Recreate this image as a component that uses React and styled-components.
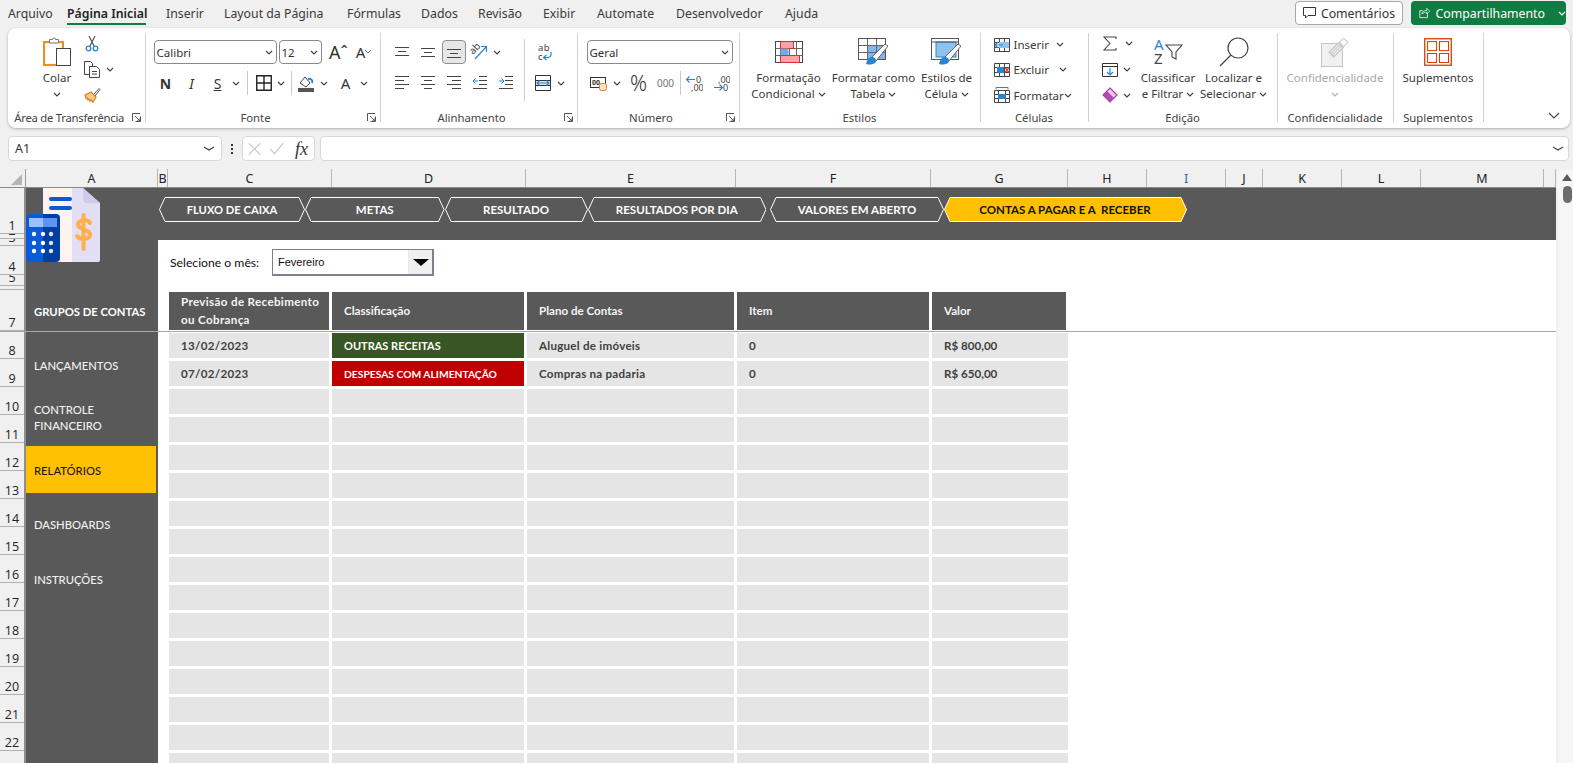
import React from 'react';
import styled, { createGlobalStyle } from 'styled-components';

const Global = createGlobalStyle`
  html, body { margin: 0; padding: 0; background: #f0f0f0; overflow: hidden; }
  * { box-sizing: border-box; }
`;
const UI = `"Noto Sans", "Open Sans", sans-serif`;
const CELL = `Lato, "Liberation Sans", sans-serif`;

const App_ = styled.div`
  width: 1573px; height: 763px; overflow: hidden; display: flex; flex-direction: column;
  background: #f0f0f0; font-family: ${UI}; color: #333; position: relative;
`;
/* menu */
const MenuBar = styled.div`height: 28px; display: flex; align-items: flex-start; padding-left: 8px; flex: none;`;
const MenuTab = styled.div`
  width: ${p => p.$w}px; margin-right: ${p => p.$mr}px; height: 25px; line-height: 27px; font-size: 12.3px; white-space: nowrap;
  color: ${p => (p.$on ? '#222' : '#3a3a3a')}; font-weight: ${p => (p.$on ? 600 : 400)};
  border-bottom: ${p => (p.$on ? '2px solid #107c41' : '0')};
`;
const MenuRight = styled.div`margin-left: auto; display: flex; gap: 8px; padding: 1px 7px 0 0;`;
const Comments = styled.div`
  width: 108px; height: 24px; background: #fff; border: 1px solid #a8a8a8; border-radius: 4px; font-size: 12.3px;
  display: flex; align-items: center; justify-content: center; gap: 5px; color: #333;
`;
const Share = styled.div`
  width: 155px; height: 24px; background: #107c41; border-radius: 4px; font-size: 12.3px; color: #fff;
  display: flex; align-items: center; padding-left: 8px; gap: 5px;
`;
const ShareChev = styled.span`margin-left: 8px; display: inline-flex;`;
/* ribbon */
const Ribbon = styled.div`
  margin-left: 8px; width: 1562px; height: 100px; flex: none; background: #fff; border-radius: 8px;
  box-shadow: 0 1px 3px rgba(0,0,0,.28); display: flex; position: relative;
`;
const Group = styled.div`
  width: ${p => p.$w}px; height: 89px; margin-top: 5px; position: relative; display: flex; flex-direction: column;
  border-right: 1px solid #d2d2d2; flex: none;
`;
const Body = styled.div`
  height: 75px; flex: none; display: flex; padding: ${p => p.$p || '0'};
  justify-content: ${p => p.$center ? 'center' : 'flex-start'};
`;
const GroupLabel = styled.div`
  height: 20px; line-height: 20px; font-size: 11.3px; text-align: center; color: #444; white-space: nowrap;
  padding-right: ${p => (p.$launcher ? 14 : 0)}px; letter-spacing: ${p => p.$ls || 0}px;
`;
const Launcher = styled.span`position: absolute; right: 4px; bottom: 0; display: flex;`;
const Collapse = styled.span`position: absolute; right: 10px; bottom: 9px; display: flex;`;
const Big = styled.div`
  width: ${p => p.$w}px; flex: none; display: flex; flex-direction: column; align-items: center;
  font-size: 11.5px; line-height: 16px; color: ${p => (p.$off ? '#a9a9a9' : '#3a3a3a')}; white-space: nowrap;
`;
const BigIcon = styled.div`height: 37px; display: flex; align-items: center; justify-content: center;`;
const BigLine = styled.div`height: 16px; display: flex; align-items: center; gap: 3px;`;
const SmallCol = styled.div`
  display: flex; flex-direction: column; margin: ${p => p.$mt ?? -2}px 0 0 ${p => p.$ml || 0}px; width: ${p => p.$w}px; flex: none;
`;
const SmallRow = styled.div`height: 26px; display: flex; align-items: center; font-size: 11.5px; color: #3a3a3a;`;
const SmallText = styled.span`width: ${p => p.$w}px; flex: none; padding-left: 4px; white-space: nowrap;`;
const Stack = styled.div`
  display: flex; flex-direction: column; gap: 7px; padding-top: 7px; width: ${p => p.$w ? p.$w + 'px' : 'auto'}; flex: none;
  padding-left: ${p => p.$pl || 0}px;
`;
const Row = styled.div`height: 24px; display: flex; align-items: center; padding-left: ${p => p.$pl || 0}px;`;
const Tool = styled.div`
  width: ${p => p.$w}px; height: 24px; flex: none; display: flex; align-items: center; justify-content: center;
  margin-left: ${p => p.$ml || 0}px; color: ${p => p.$c || '#333'}; font-size: ${p => p.$fs || 13}px; font-weight: ${p => p.$fw || 400}; font-style: ${p => p.$it ? 'italic' : 'normal'};
  text-decoration: ${p => p.$un ? 'underline' : 'none'}; font-family: ${UI};
`;
const Pressed = styled(Tool)`background: #e6e6e6; border: 1px solid #8e8e8e; border-radius: 4px; margin-left: 1px;`;
const ToolSep = styled.div`width: 1px; height: 24px; background: #c8c8c8; flex: none; margin: 0 ${p => p.$m}px;`;
const VSep = styled.div`width: 1px; height: 62px; margin-top: 6px; background: #cfcfcf; flex: none;`;
const Select = styled.div`
  width: ${p => p.$w}px; height: 24px; flex: none; margin-right: ${p => p.$mr || 0}px; border: 1px solid #8a8a8a; border-radius: 4px; background: #fff;
  display: flex; align-items: center; justify-content: space-between; padding: 0 3px 0 2px; font-size: 11.5px; color: #333;
`;
/* formula bar */
const FormulaBar = styled.div`margin: 8px 0 8px 8px; height: 25px; flex: none; display: flex; align-items: center;`;
const Box = styled.div`
  height: 25px; width: ${p => p.$w}px; background: #fff; border: 1px solid #d8d8d8; border-radius: 4px; flex: none;
  display: flex; align-items: center; justify-content: ${p => p.$j || 'space-between'}; padding: 0 ${p => p.$pr ?? 6}px 0 ${p => p.$pl ?? 6}px;
  font-size: 12.5px; color: #333; margin-left: ${p => p.$ml || 0}px; gap: ${p => p.$gap || 0}px;
`;
const Dots = styled.span`
  margin-left: 9px; display: flex; flex-direction: column; gap: 2px;
  i { width: 2px; height: 2px; background: #333; display: block; }
`;
const Fx = styled.span`font: italic 400 18px "Liberation Serif", serif; color: #333; margin-left: 3px; line-height: 20px;`;
/* sheet */
const SheetArea = styled.div`flex: 1; min-height: 0; display: flex; position: relative;`;
const SheetCol = styled.div`width: 1556px; flex: none; display: flex; flex-direction: column;`;
const ScrollBar = styled.div`
  flex: 1; margin-left: 2px; background: #f6f6f6; border-radius: 6px 0 0 0; position: relative; display: flex; flex-direction: column; align-items: center;
  padding: 5px 0 0 3px;
`;
const ScrollUp = styled.span`width: 0; height: 0; border-left: 5px solid transparent; border-right: 5px solid transparent; border-bottom: 7px solid #5a5a5a;`;
const Thumb = styled.span`width: 9px; height: 17px; border-radius: 5px; background: #6c6c6c; margin-top: 5px;`;
const ColHeads = styled.div`height: 19px; display: flex; flex: none; background: #f0f0f0; border-bottom: 1px solid #8a8a8a;`;
const Corner = styled.div`width: 26px; flex: none; position: relative; border-right: 1px solid #9a9a9a;`;
const CornerTri = styled.span`
  position: absolute; right: 3px; bottom: 2px; width: 0; height: 0; border-left: 11px solid transparent; border-bottom: 11px solid #b4b4b4;
`;
const ColHead = styled.div`
  width: ${p => p.$w}px; flex: none; text-align: center; line-height: 20px; font-size: 12.5px; color: ${p => p.$c || '#222'}; border-right: 1px solid #b6b6b6; overflow: hidden;
`;
const SheetRows = styled.div`flex: 1; min-height: 0; display: flex; overflow: hidden;`;
const RowHeads = styled.div`width: 26px; flex: none; border-right: 2px solid #8f8f8f; background: #f0f0f0;`;
const RowHead = styled.div`
  height: ${p => p.$h}px; border-bottom: 1px solid #b0b0b0; overflow: hidden; display: flex; align-items: flex-end; justify-content: center;
  padding-bottom: 1px; font-size: 12.5px; line-height: 13px; color: #222; font-family: "Open Sans", sans-serif;
`;
const Sidebar = styled.div`width: 132px; flex: none; background: #595959; font-family: ${CELL}; font-size: 11.25px; color: #f2f2f2;`;
const Logo = styled.div`height: 74px; display: flex;`;
const SideTitle = styled.div`height: 69px; padding: 42px 0 0 8px; line-height: 16px; font-weight: 700; color: #fff;`;
const SideItem = styled.div`
  height: ${p => p.$h}px; padding: ${p => p.$pt}px 0 0 8px; line-height: 16px; font-weight: 500;
  background: ${p => (p.$on ? '#ffc000' : 'transparent')}; color: ${p => (p.$on ? '#1a1a1a' : '#f2f2f2')};
  width: ${p => (p.$on ? '130px' : 'auto')};
`;
const Main = styled.div`flex: 1; min-width: 0; background: #fff; font-family: ${CELL}; font-size: 11.6px;`;
const TopBand = styled.div`height: 52px; background: #595959; padding: 9px 0 0 1px; display: flex; align-items: flex-start;`;
const TabItem = styled.div`
  width: ${p => p.$w}px; height: 25px; flex: none; position: relative; margin-left: ${p => p.$ml || 0}px; display: flex; align-items: center; justify-content: center;
  font-weight: 700; font-size: ${p => p.$fs || 11.5}px; color: ${p => (p.$on ? '#111' : '#fff')};
`;
const TabShape = styled.svg`position: absolute; left: 0; top: 0;`;
const TabText = styled.span`position: relative; white-space: pre;`;
const MonthRow = styled.div`height: 36px; padding: 9px 0 0 12px; display: flex; align-items: center; color: #111; font-size: 12.2px;`;
const MonthLabel = styled.span`width: 102px; flex: none;`;
const Combo = styled.div`
  width: 162px; height: 27px; border: 1px solid #7f7f90; border-right-width: 2px; border-bottom-width: 2px; display: flex; align-items: center; justify-content: space-between;
  font: 11px "Liberation Sans", sans-serif; color: #111; padding-left: 5px; background: #fff;
`;
const ComboBtn = styled.div`
  width: 24px; height: 24px; background: #f0f0f0; display: flex; align-items: center; justify-content: center;
  border-left: 1px solid #e8e8e8;
`;
const ComboArrow = styled.span`width: 0; height: 0; border-left: 8px solid transparent; border-right: 8px solid transparent; border-top: 7px solid #000;`;
const Table = styled.div`
  margin: 16px 0 0 11px; display: grid; grid-template-columns: 160px 192px 207px 192px 136px; column-gap: 3px; row-gap: 3px;
  grid-template-rows: 38px; grid-auto-rows: 25px; width: max-content;
`;
const HeadCell = styled.div`
  height: 38px; background: #595959; color: #f4f4f4; font-weight: 700; padding: 0 0 0 12px; display: flex; align-items: center; line-height: 18px;
  margin-right: ${p => p.$mr || 0}px; white-space: nowrap; letter-spacing: ${p => p.$ls || 0}px;
`;
const Cell = styled.div`
  background: ${p => p.$bg || '#e5e5e5'}; color: ${p => p.$c || '#404040'}; font-weight: 700; padding-left: 12px; display: flex; align-items: center; white-space: nowrap;
  letter-spacing: ${p => p.$ls || 0}px; font-size: ${p => p.$fs || 11.6}px;
`;
const Freeze = styled.div`position: absolute; left: 0; top: 162px; width: 1556px; height: 1px; background: #a8a8a8;`;

/* icons */
const Svg = ({ w, h, children, ...r }) => <svg width={w} height={h} viewBox={`0 0 ${w} ${h}`} fill="none" {...r}>{children}</svg>;
const Chev = ({ c = '#444', w = 8 }) => <Svg w={w} h={5}><polyline points={`1,1 ${w / 2},4 ${w - 1},1`} stroke={c} strokeWidth="1.2" /></Svg>;
const Launch = () => <Svg w={9} h={9}><path d="M.5 8V.5H8M8.5 3.5V8.5H3.5M3 3l5 5M8 5v3H5" stroke="#555" /></Svg>;

const Paste = () => <Svg w={28} h={31}>
  <rect x="1" y="6" width="19" height="23" fill="#fff5dc" stroke="#e8902a" strokeWidth="2" />
  <rect x="3" y="8" width="15" height="19" fill="#fff" />
  <path d="M6.5 7V3.5h3a1.5 1.5 0 0 1 3 0h3V7z" fill="#fff" stroke="#777" />
  <rect x="13.5" y="12.5" width="14" height="17" fill="#fff" stroke="#444" />
</Svg>;
const Scissors = () => <Svg w={16} h={17}>
  <path d="M5 1l5 10M11 1L6 11" stroke="#555" strokeWidth="1.2" />
  <circle cx="4.5" cy="13.5" r="2.3" stroke="#2a85d0" strokeWidth="1.3" /><circle cx="11.5" cy="13.5" r="2.3" stroke="#2a85d0" strokeWidth="1.3" />
</Svg>;
const Copy = () => <Svg w={17} h={17}>
  <path d="M.5 .5h6l2 2v11H.5z" fill="#fff" stroke="#444" />
  <path d="M5.5 5.5h7l3 3v8h-10z" fill="#fff" stroke="#444" /><path d="M8 10.5h5M8 13h5" stroke="#444" />
</Svg>;
const Brush = () => <Svg w={17} h={16}>
  <path d="M1 8l6-3 5 5-3 5-2-2-1 1-1-2-1 1-1-2-1 0z" fill="#f7c98a" stroke="#e07f1d" strokeWidth="1.3" />
  <path d="M10 7l5-5.5 1 1L11 9" fill="#fff" stroke="#555" />
</Svg>;
const Borders = () => <Svg w={16} h={16}><path d="M.75 .75h14.5v14.5H.75zM8 .75v14.5M.75 8h14.5" stroke="#222" strokeWidth="1.4" /></Svg>;
const FillC = () => <Svg w={16} h={17}>
  <path d="M2 8l5-6 5 6-4 4z" fill="#fff" stroke="#444" /><path d="M10 4a3 3 0 0 1 4 4" stroke="#2a85d0" strokeWidth="2" />
  <rect x="0" y="13" width="16" height="4" fill="#555" />
</Svg>;
const Lines = ({ l, w = 14, h = 16, c = '#444' }) => <Svg w={w} h={h}>{l.map(([a, b, y], i) => <path key={i} d={`M${a} ${y + .5}H${b}`} stroke={c} />)}</Svg>;
const Rotate = () => <Svg w={18} h={18}>
  <text x="0" y="9" fontSize="10" fill="#444" fontFamily="Noto Sans, sans-serif" transform="rotate(-45 5 7)">ab</text>
  <path d="M5 16L16 4M11 3.5h5.5V9" stroke="#2a85d0" strokeWidth="1.2" />
</Svg>;
const Wrap = () => <Svg w={17} h={18}>
  <text x="1" y="8" fontSize="9.5" fill="#444" fontFamily="Noto Sans, sans-serif" letterSpacing=".5">ab</text>
  <text x="1" y="17" fontSize="9.5" fill="#444" fontFamily="Noto Sans, sans-serif">c</text>
  <path d="M14 9v2.5a3 3 0 0 1-3 3H7M9.5 12l-3 2.5 3 2.5" stroke="#2a85d0" strokeWidth="1.2" />
</Svg>;
const Merge = () => <Svg w={16} h={16}>
  <path d="M.5 .5h15v15H.5zM.5 5.5h15M.5 10.5h15" stroke="#333" /><rect x="1" y="6" width="14" height="4" fill="#cfe6f7" />
  <path d="M2 8h12M4.5 5.5L2 8l2.5 2.500M11.5 5.5L14 8l-2.5 2.500" stroke="#2a85d0" strokeWidth="1.1" />
</Svg>;
const Acct = () => <Svg w={17} h={15}>
  <rect x=".5" y="1.5" width="15" height="10" fill="#fff" stroke="#333" />
  <text x="2" y="9" fontSize="7" fill="#333" fontWeight="700" fontFamily="Noto Sans, sans-serif">00</text>
  <rect x="9.5" y="7.5" width="7" height="7" rx="2" fill="#fbe4c8" stroke="#e07f1d" />
</Svg>;
const DecI = ({ flip }) => <Svg w={17} h={17}>
  <text x={flip ? 5 : 10} y="7.5" fontSize="9" fill="#444" fontFamily="Noto Sans, sans-serif">{flip ? ',00' : '0'}</text>
  <text x={flip ? 10 : 5} y="16" fontSize="9" fill="#444" fontFamily="Noto Sans, sans-serif">{flip ? '0' : ',00'}</text>
  {flip ? <path d="M1 12.5h8M6.5 9.5l3 3-3 3" stroke="#2a85d0" strokeWidth="1.2" /> : <path d="M9 4.5H1M3.5 1.5l-3 3 3 3" stroke="#2a85d0" strokeWidth="1.2" />}
</Svg>;
const CondFmt = () => <Svg w={28} h={22}>
  <rect x=".5" y=".5" width="27" height="21" fill="#fff" stroke="#444" />
  <path d="M5.5 .5v21M14.5 .5v21M21.5 .5v21M.5 7.5h27M.5 14.500h27" stroke="#666" />
  <rect x="5.500" y=".5" width="13" height="7" fill="#f8a3a8" stroke="#d13438" />
  <rect x="5.500" y="7.500" width="8" height="7" fill="#6aaee6" />
  <rect x="5.500" y="14.500" width="19" height="7" fill="#f8a3a8" stroke="#d13438" />
</Svg>;
const TableFmt = ({ big }) => <Svg w={31} h={27}>
  <rect x=".5" y=".5" width="27" height="21" fill="#fff" stroke="#555" />
  {big ? <rect x="5" y="4" width="20" height="15" fill="#8fc1ee" stroke="#2a85d0" /> : <rect x="9" y="7" width="18" height="14" fill="#7fb7ea" />}
  {!big && <path d="M9.5 .5v21M18.5 .5v21M.5 7.500h27M.5 14.500h27" stroke="#666" />}
  {big && <path d="M.5 4h27" stroke="#555" />}
  <path d="M13 20L27 6l3 2-12 15z" fill="#fff" stroke="#666" />
  <path d="M8 26c1-5 4-8 7-7 3 1 4 4 2 6-2 1.500-6 2-9 1z" fill="#2a85d0" />
</Svg>;
const CellI = ({ kind }) => <Svg w={16} h={kind === 'f' ? 16 : 14}>
  {kind === 'f' ? <>
    <path d="M.5 3.5h15v12H.5zM.5 7.5h15M.5 11.5h15M4.5 3.5v12M11.5 3.5v12" stroke="#444" />
    <rect x="4" y="7" width="8" height="5" fill="#2a85d0" /><path d="M2 .5h12M2 .5v2M14 .5v2" stroke="#2a85d0" />
  </> : <>
    <path d="M.5 .5h15v13H.5zM.5 4.5h15M.5 9.5h15M5.5 .5v13M10.5 .5v13" stroke="#444" />
    {kind === 'i'
      ? <><rect x="5" y="4" width="10" height="6" fill="#8fc1ee" /><path d="M9 7H1M4 4L1 7l3 3" stroke="#2a85d0" strokeWidth="1.2" /></>
      : <><rect x="3" y="4" width="7" height="6" fill="#2a85d0" /><path d="M11 4.5l4 5M15 4.5l-4 5" stroke="#e53935" strokeWidth="1.4" /></>}
  </>}
</Svg>;
const Sigma = () => <Svg w={14} h={15}><path d="M13 3V1H1l6 6.5L1 14h12v-2" stroke="#444" strokeWidth="1.1" /></Svg>;
const FillDown = () => <Svg w={16} h={14}><path d="M.5 .5h15v13H.5zM.5 3.5h15" stroke="#333" /><path d="M8 5v7M5 9l3 3 3-3" stroke="#2a85d0" strokeWidth="1.2" /></Svg>;
const Eraser = () => <Svg w={16} h={16}>
  <path d="M8 1l7 7-7 7-7-7z" fill="#f2c8ef" stroke="#a83fa8" strokeWidth="1.2" /><path d="M1 8l4-4 7 7-4 4z" fill="#b04bb0" />
</Svg>;
const SortI = () => <Svg w={29} h={27}>
  <text x="0" y="12" fontSize="15" fill="#2a85d0" fontFamily="Noto Sans, sans-serif">A</text>
  <text x="0" y="26" fontSize="15" fill="#444" fontFamily="Noto Sans, sans-serif">Z</text>
  <path d="M12 7h16l-6 7v7l-4-2v-5z" fill="#fff" stroke="#444" strokeWidth="1.1" />
</Svg>;
const FindI = () => <Svg w={30} h={30}><circle cx="19" cy="11" r="10" stroke="#444" strokeWidth="1.2" /><path d="M12 18L1 29" stroke="#444" strokeWidth="1.2" /></Svg>;
const ConfI = () => <Svg w={28} h={30}>
  <rect x=".5" y="6.5" width="21" height="23" fill="#f0f0f0" stroke="#c6c6c6" />
  <g transform="rotate(45 17 11)">
    <rect x="14" y="0" width="6" height="6" fill="#fff" stroke="#c6c6c6" />
    <rect x="13" y="6" width="8" height="15" fill="#cccccc" />
    <path d="M15 8v11M17 8v11M19 8v11" stroke="#f0f0f0" />
  </g>
</Svg>;
const AddIn = () => <Svg w={28} h={28}>
  <rect x=".75" y=".75" width="26.5" height="26.5" stroke="#d83b01" strokeWidth="1.3" />
  <rect x="3.6" y="3.6" width="9" height="9" stroke="#d83b01" /><rect x="15.5" y="3.6" width="9" height="9" stroke="#d83b01" />
  <rect x="3.6" y="15.5" width="9" height="9" stroke="#d83b01" /><rect x="15.5" y="15.5" width="9" height="9" stroke="#d83b01" />
</Svg>;
const Bubble = () => <Svg w={13} h={12}><path d="M.5 .5h12v8H5L2.5 11V8.5h-2z" stroke="#333" /></Svg>;
const ShareI = () => <Svg w={15} h={14}><path d="M11 7v6H1V4h4" stroke="#fff" /><path d="M4 9c0-3 3-5 7-5V1l4 4-4 4V6.5c-3 0-5 1-7 2.500z" stroke="#fff" transform="scale(.92)" /></Svg>;
const XI = () => <Svg w={14} h={14}><path d="M1 1l12 12M13 1L1 13" stroke="#c4c4c4" strokeWidth="1.2" /></Svg>;
const CheckI = () => <Svg w={16} h={13}><path d="M1 7l5 5L15 1" stroke="#c4c4c4" strokeWidth="1.2" /></Svg>;
const LogoArt = () => <Svg w={74} h={74}>
  <path d="M17 0h29v74H19a2 2 0 0 1-2-2z" fill="#fff3ef" />
  <path d="M46 0h11l17 15v57a2 2 0 0 1-2 2H46z" fill="#e2dff4" />
  <path d="M57 0l17 15H61a4 4 0 0 1-4-4z" fill="#cfcbe8" />
  <rect x="23" y="9" width="23" height="4" rx="2" fill="#0a5bd3" /><rect x="23" y="18" width="23" height="4" rx="2" fill="#0a5bd3" />
  <path d="M64 35c-2-4-11-4-12 1-1 6 13 5 12 11-1 5-11 5-13 1M57.500 27v34" stroke="#ffb04c" strokeWidth="4" strokeLinecap="round" />
  <path d="M0 30a4 4 0 0 1 4-4h13v48H4a4 4 0 0 1-4-4z" fill="#0a5bd9" />
  <path d="M17 26h13a4 4 0 0 1 4 4v40a4 4 0 0 1-4 4H17z" fill="#003f9f" />
  <rect x="3" y="30" width="14" height="9" fill="#9dc0ff" /><rect x="17" y="30" width="14" height="9" fill="#5f95f2" />
  {[46, 55, 63].map(y => [8, 17, 25].map(x => <circle key={x + '-' + y} cx={x} cy={y} r="2.200" fill={x > 17 ? '#e2dff4' : '#fff'} />))}
</Svg>;

const menu = [['Arquivo', 44, 15], ['Página Inicial', 79, 20], ['Inserir', 38, 20], ['Layout da Página', 103, 20], ['Fórmulas', 54, 20], ['Dados', 37, 20], ['Revisão', 45, 20], ['Exibir', 34, 20], ['Automate', 59, 20], ['Desenvolvedor', 89, 20], ['Ajuda', 40, 0]];
const cols = [['A', 132], ['B', 10], ['C', 164], ['D', 194], ['E', 210], ['F', 195], ['G', 137], ['H', 79], ['I', 79, '#1f6fb5'], ['J', 37], ['K', 79], ['L', 79], ['M', 123], ['', 12]];
const rowH = [46, 5, 7, 29, 11, 4, 41, ...Array(16).fill(28)];
const tabs = [['FLUXO DE CAIXA', 146, 0, false, 11.2], ['METAS', 139.5, 0], ['RESULTADO', 143, 0], ['RESULTADOS POR DIA', 178.5, 0], ['VALORES EM ABERTO', 174, 4], ['CONTAS A PAGAR E A  RECEBER', 243, -0.5, true]];
const data = [
  ['13/02/2023', ['OUTRAS RECEITAS', '#375623', 11], 'Aluguel de imóveis', '0', 'R$ 800,00'],
  ['07/02/2023', ['DESPESAS COM ALIMENTAÇÃO', '#c00000', 10.3], 'Compras na padaria', '0', 'R$ 650,00'],
];
const empty = Array(14).fill(0);

const Tab = ({ label, w, ml, on, fs }) => (
  <TabItem $w={w} $ml={ml} $on={on} $fs={fs}>
    <TabShape width={w} height={25} viewBox={`0 0 ${w} 25`}>
      <polygon points={`.5,12.5 6,.5 ${w - 6},.5 ${w - .5},12.5 ${w - 6},24.5 6,24.5`} fill={on ? '#ffc000' : '#595959'} stroke="#fff" strokeWidth="1" />
    </TabShape>
    <TabText>{label}</TabText>
  </TabItem>
);

export default function App() {
  return (
    <App_>
      <Global />
      <MenuBar>
        {menu.map(([m, w, r], i) => <MenuTab key={m} $w={w} $mr={r} $on={i === 1}>{m}</MenuTab>)}
        <MenuRight>
          <Comments><Bubble />Comentários</Comments>
          <Share><ShareI />Compartilhamento<ShareChev><Chev c="#fff" /></ShareChev></Share>
        </MenuRight>
      </MenuBar>

      <Ribbon>
        <Group $w={137.5}>
          <Body $p="0 0 0 24px">
            <Big $w={50}><BigIcon><Paste /></BigIcon>Colar<BigLine><Chev /></BigLine></Big>
            <SmallCol $w={40} $ml={2}>
              <SmallRow><Scissors /></SmallRow>
              <SmallRow><Copy /><Tool $w={18}><Chev /></Tool></SmallRow>
              <SmallRow><Brush /></SmallRow>
            </SmallCol>
          </Body>
          <GroupLabel $launcher $ls={-0.25}>Área de Transferência</GroupLabel>
          <Launcher><Launch /></Launcher>
        </Group>

        <Group $w={235}>
          <Body $p="0 0 0 8px">
            <Stack>
              <Row>
                <Select $w={123} $mr={2}>Calibri<Chev /></Select>
                <Select $w={43}>12<Chev /></Select>
                <Tool $w={30} $fs={18} $ml={2}>Aˆ</Tool>
                <Tool $w={20} $fs={15}>A<Svg w={6} h={4}><polyline points="0,0 3,3 6,0" stroke="#2a85d0" /></Svg></Tool>
              </Row>
              <Row>
                <Tool $w={24} $fs={14} $fw={700}>N</Tool>
                <Tool $w={28} $fs={14} $it>I</Tool>
                <Tool $w={24} $fs={14} $un>S</Tool>
                <Tool $w={12}><Chev /></Tool>
                <ToolSep $m={5} />
                <Tool $w={23}><Borders /></Tool>
                <Tool $w={11}><Chev /></Tool>
                <ToolSep $m={4} />
                <Tool $w={21}><FillC /></Tool>
                <Tool $w={15}><Chev /></Tool>
                <Tool $w={28} $fs={15}>A</Tool>
                <Tool $w={8}><Chev /></Tool>
              </Row>
            </Stack>
          </Body>
          <GroupLabel $launcher>Fonte</GroupLabel>
          <Launcher><Launch /></Launcher>
        </Group>

        <Group $w={197}>
          <Body $p="0 0 0 8px">
            <Stack $w={135}>
              <Row>
                <Tool $w={26}><Lines l={[[0, 14, 3], [3, 11, 7], [0, 14, 11]]} /></Tool>
                <Tool $w={26}><Lines l={[[0, 14, 4], [3, 11, 8], [0, 14, 12]]} /></Tool>
                <Pressed $w={24}><Lines l={[[1, 15, 5], [4, 12, 9], [1, 15, 13]]} w={16} h={16} /></Pressed>
                <Tool $w={27}><Rotate /></Tool>
                <Tool $w={8}><Chev /></Tool>
              </Row>
              <Row>
                <Tool $w={26}><Lines l={[[0, 14, 1], [0, 9, 5], [0, 14, 9], [0, 9, 13]]} /></Tool>
                <Tool $w={26}><Lines l={[[0, 14, 1], [3, 11, 5], [0, 14, 9], [3, 11, 13]]} /></Tool>
                <Tool $w={26}><Lines l={[[0, 14, 1], [5, 14, 5], [0, 14, 9], [5, 14, 13]]} /></Tool>
                <Tool $w={26}><Svg w={14} h={16}><path d="M6 1.500h8M6 5.500h8M6 9.500h8M0 13.500h14" stroke="#444" /><path d="M5 6H0M2.500 3.500L0 6l2.500 2.500" stroke="#2a85d0" /></Svg></Tool>
                <Tool $w={26}><Svg w={14} h={16}><path d="M6 1.500h8M6 5.500h8M6 9.500h8M0 13.500h14" stroke="#444" /><path d="M0 6h5M2.500 3.500L5 6l-2.500 2.500" stroke="#2a85d0" /></Svg></Tool>
              </Row>
            </Stack>
            <VSep />
            <Stack>
              <Row $pl={12}><Wrap /></Row>
              <Row $pl={10}><Merge /><Tool $w={20}><Chev /></Tool></Row>
            </Stack>
          </Body>
          <GroupLabel $launcher>Alinhamento</GroupLabel>
          <Launcher><Launch /></Launcher>
        </Group>

        <Group $w={162}>
          <Body $p="0 0 0 9px">
            <Stack>
              <Row><Select $w={146}>Geral<Chev /></Select></Row>
              <Row>
                <Tool $w={24}><Acct /></Tool>
                <Tool $w={12}><Chev /></Tool>
                <Tool $w={2} />
                <Tool $w={28} $fs={21} $fw={300}>%</Tool>
                <Tool $w={26} $fs={10} $c="#777">000</Tool>
                <ToolSep $m={1} />
                <Tool $w={25}><DecI /></Tool>
                <Tool $w={2} />
                <Tool $w={25}><DecI flip /></Tool>
              </Row>
            </Stack>
          </Body>
          <GroupLabel $launcher>Número</GroupLabel>
          <Launcher><Launch /></Launcher>
        </Group>

        <Group $w={241}>
          <Body $p="0 0 0 7px">
            <Big $w={84}><BigIcon><CondFmt /></BigIcon>Formatação<BigLine>Condicional<Chev /></BigLine></Big>
            <Big $w={86}><BigIcon><TableFmt /></BigIcon>Formatar como<BigLine>Tabela<Chev /></BigLine></Big>
            <Big $w={60}><BigIcon><TableFmt big /></BigIcon>Estilos de<BigLine>Célula<Chev /></BigLine></Big>
          </Body>
          <GroupLabel>Estilos</GroupLabel>
        </Group>

        <Group $w={108}>
          <Body $p="0 0 0 13px">
            <SmallCol $w={90} $mt={-1}>
              <SmallRow><CellI kind="i" /><SmallText $w={46}>Inserir</SmallText><Chev /></SmallRow>
              <SmallRow><CellI kind="e" /><SmallText $w={49}>Excluir</SmallText><Chev /></SmallRow>
              <SmallRow><CellI kind="f" /><SmallText $w={54}>Formatar</SmallText><Chev /></SmallRow>
            </SmallCol>
          </Body>
          <GroupLabel>Células</GroupLabel>
        </Group>

        <Group $w={189}>
          <Body $p="0 0 0 13px">
            <SmallCol $w={35}>
              <SmallRow><Tool $w={16}><Sigma /></Tool><Tool $w={12} $ml={5}><Chev /></Tool></SmallRow>
              <SmallRow><FillDown /><Tool $w={12} $ml={3}><Chev /></Tool></SmallRow>
              <SmallRow><Eraser /><Tool $w={12} $ml={3}><Chev /></Tool></SmallRow>
            </SmallCol>
            <Big $w={63}><BigIcon><SortI /></BigIcon>Classificar<BigLine>e Filtrar<Chev /></BigLine></Big>
            <Big $w={68}><BigIcon><FindI /></BigIcon>Localizar e<BigLine>Selecionar<Chev /></BigLine></Big>
          </Body>
          <GroupLabel>Edição</GroupLabel>
        </Group>

        <Group $w={116}>
          <Body $center>
            <Big $w={110} $off><BigIcon><ConfI /></BigIcon>Confidencialidade<BigLine><Chev c="#b0b0b0" /></BigLine></Big>
          </Body>
          <GroupLabel>Confidencialidade</GroupLabel>
        </Group>

        <Group $w={90}>
          <Body $center>
            <Big $w={80}><BigIcon><AddIn /></BigIcon>Suplementos</Big>
          </Body>
          <GroupLabel>Suplementos</GroupLabel>
        </Group>
        <Collapse><Svg w={12} h={7}><polyline points="1,1 6,6 11,1" stroke="#444" strokeWidth="1.1" /></Svg></Collapse>
      </Ribbon>

      <FormulaBar>
        <Box $w={214}>A1<Chev w={12} /></Box>
        <Dots><i /><i /><i /></Dots>
        <Box $w={73} $ml={9} $j="flex-start" $gap={8} $pl={5}><XI /><CheckI /><Fx>fx</Fx></Box>
        <Box $w={1249} $ml={5} $j="flex-end" $pr={4}><Chev w={12} /></Box>
      </FormulaBar>

      <SheetArea>
        <SheetCol>
          <ColHeads>
            <Corner><CornerTri /></Corner>
            {cols.map(([c, w, k], i) => <ColHead key={i} $w={w} $c={k}>{c}</ColHead>)}
          </ColHeads>
          <SheetRows>
            <RowHeads>{rowH.map((h, i) => <RowHead key={i} $h={h}>{i + 1}</RowHead>)}</RowHeads>
            <Sidebar>
              <Logo><LogoArt /></Logo>
              <SideTitle>GRUPOS DE CONTAS</SideTitle>
              <SideItem $h={57} $pt={27}>LANÇAMENTOS</SideItem>
              <SideItem $h={58} $pt={14}>CONTROLE<br />FINANCEIRO</SideItem>
              <SideItem $h={47} $pt={17} $on>RELATÓRIOS</SideItem>
              <SideItem $h={55} $pt={24}>DASHBOARDS</SideItem>
              <SideItem $h={55} $pt={24}>INSTRUÇÕES</SideItem>
            </Sidebar>
            <Main>
              <TopBand>{tabs.map(([l, w, ml, on, fs]) => <Tab key={l} label={l} w={w} ml={ml} on={on} fs={fs} />)}</TopBand>
              <MonthRow>
                <MonthLabel>Selecione o mês:</MonthLabel>
                <Combo>Fevereiro<ComboBtn><ComboArrow /></ComboBtn></Combo>
              </MonthRow>
              <Table>
                <HeadCell $ls={0.35}><span>Previsão de Recebimento<br />ou Cobrança</span></HeadCell>
                <HeadCell>Classificação</HeadCell>
                <HeadCell>Plano de Contas</HeadCell>
                <HeadCell>Item</HeadCell>
                <HeadCell $mr={2}>Valor</HeadCell>
                {data.map(r => (
                  <React.Fragment key={r[0]}>
                    <Cell $ls={0.3}>{r[0]}</Cell>
                    <Cell $bg={r[1][1]} $c="#fff" $fs={r[1][2]}>{r[1][0]}</Cell>
                    <Cell $ls={0.25}>{r[2]}</Cell>
                    <Cell>{r[3]}</Cell>
                    <Cell>{r[4]}</Cell>
                  </React.Fragment>
                ))}
                {empty.map((_, i) => <React.Fragment key={i}><Cell /><Cell /><Cell /><Cell /><Cell /></React.Fragment>)}
              </Table>
            </Main>
          </SheetRows>
        </SheetCol>
        <ScrollBar><ScrollUp /><Thumb /></ScrollBar>
        <Freeze />
      </SheetArea>
    </App_>
  );
}
